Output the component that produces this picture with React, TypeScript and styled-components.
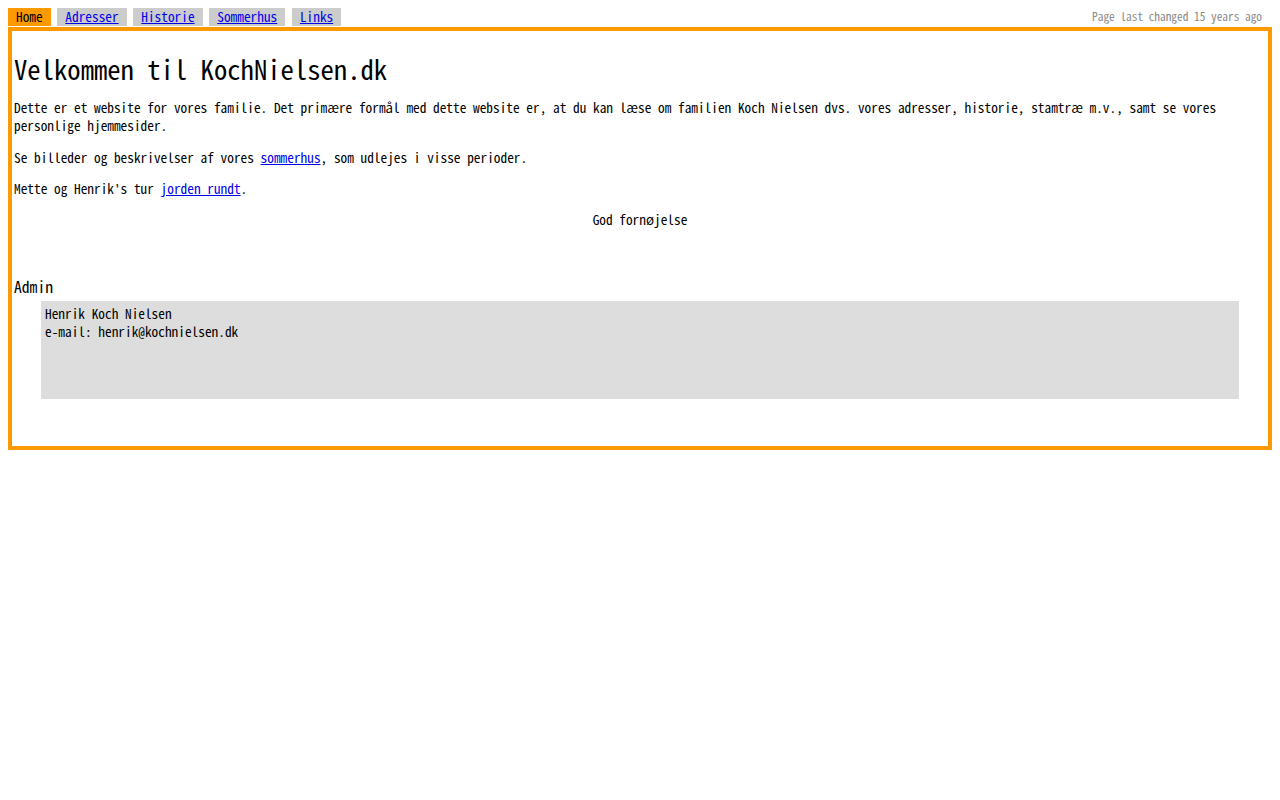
import React from "react";
import styled, { createGlobalStyle } from "styled-components";

const GlobalStyle = createGlobalStyle`
  html, body { background: #fff; }
  body {
    margin: 8px;
    font-family: "Noto Sans Mono CJK SC", "DejaVu Sans Mono", monospace;
    font-size: 13.33px;
    font-weight: 300;
    color: #000;
  }
`;

const TopBar = styled.div`
  display: flex;
  justify-content: space-between;
  align-items: flex-start;
  height: 18px;
  margin-bottom: 1px;
`;

const Tabs = styled.nav`
  display: flex;
  gap: 0.5em;
`;

const Tab = styled.a<{ $active?: boolean }>`
  display: block;
  height: 18px;
  line-height: 18px;
  padding: 0 8px;
  background: ${(p) => (p.$active ? "#ff9900" : "#cccccc")};
  color: ${(p) => (p.$active ? "#000" : "#0000ee")};
  text-decoration: ${(p) => (p.$active ? "none" : "underline")};
  cursor: pointer;
`;

const Changed = styled.div`
  font-size: 11.33px;
  color: #888;
  line-height: 16px;
  padding-right: 10px;
`;

const Frame = styled.main`
  border: 4px solid #ff9900;
  padding: 2px 2px 47px 2px;
`;

const Title = styled.h1`
  font-size: 26.67px;
  font-weight: 300;
  line-height: 32px;
  margin: 20px 0 14.33px 0;
`;

const Para = styled.p<{ $center?: boolean }>`
  margin: 13.33px 0;
  line-height: 18px;
  text-align: ${(p) => (p.$center ? "center" : "left")};
`;

const Link = styled.a`
  color: #0000ee;
  text-decoration: underline;
  cursor: pointer;
`;

const SectionTitle = styled.h3`
  font-size: 15.6px;
  font-weight: 300;
  line-height: 18px;
  margin: 48px 0 6px 0;
`;

const InfoBox = styled.div`
  margin: 0 27px;
  background: #dddddd;
  height: 90px;
  padding: 4px;
  line-height: 18px;
`;

export default function App() {
  return (
    <>
      <GlobalStyle />
      <TopBar>
        <Tabs>
          <Tab $active>Home</Tab>
          <Tab>Adresser</Tab>
          <Tab>Historie</Tab>
          <Tab>Sommerhus</Tab>
          <Tab>Links</Tab>
        </Tabs>
        <Changed>Page last changed 15 years ago</Changed>
      </TopBar>
      <Frame>
        <Title>Velkommen til KochNielsen.dk</Title>
        <Para>
          Dette er et website for vores familie. Det primære formål med dette
          website er, at du kan læse om familien Koch Nielsen dvs. vores
          adresser, historie, stamtræ m.v., samt se vores personlige
          hjemmesider.
        </Para>
        <Para>
          Se billeder og beskrivelser af vores <Link>sommerhus</Link>, som
          udlejes i visse perioder.
        </Para>
        <Para>
          Mette og Henrik's tur <Link>jorden rundt</Link>.
        </Para>
        <Para $center>God fornøjelse</Para>
        <SectionTitle>Admin</SectionTitle>
        <InfoBox>
          Henrik Koch Nielsen
          <br />
          e-mail: henrik@kochnielsen.dk
        </InfoBox>
      </Frame>
    </>
  );
}
